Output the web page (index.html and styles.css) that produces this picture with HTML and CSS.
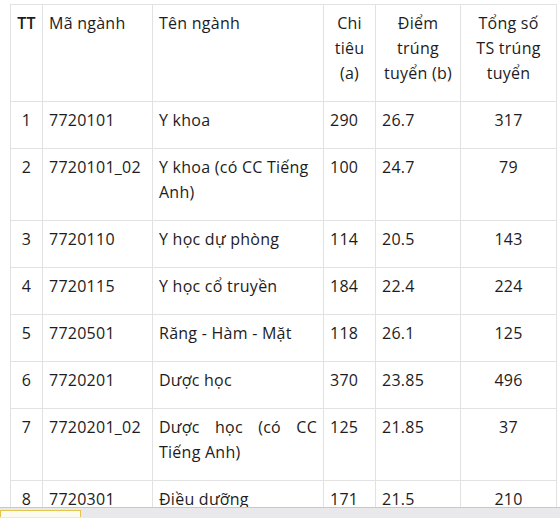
FILE: index.html
```html
<!DOCTYPE html>
<html lang="vi">
<head>
<meta charset="utf-8">
<title>Điểm trúng tuyển</title>
<link rel="stylesheet" href="styles.css">
</head>
<body>
<div class="wrap">
<table class="scores">
  <colgroup>
    <col class="c-tt"><col class="c-ma"><col class="c-ten"><col class="c-chi"><col class="c-diem"><col class="c-tong">
  </colgroup>
  <thead>
    <tr>
      <th class="center strong">TT</th>
      <th>Mã ngành</th>
      <th>Tên ngành</th>
      <th class="center">Chi<br>tiêu<br>(a)</th>
      <th class="center">Điểm<br>trúng<br>tuyển (b)</th>
      <th class="center">Tổng số<br>TS trúng<br>tuyển</th>
    </tr>
  </thead>
  <tbody>
    <tr><td class="center">1</td><td>7720101</td><td>Y khoa</td><td>290</td><td>26.7</td><td class="center">317</td></tr>
    <tr><td class="center">2</td><td>7720101_02</td><td>Y khoa (có CC Tiếng Anh)</td><td>100</td><td>24.7</td><td class="center">79</td></tr>
    <tr><td class="center">3</td><td>7720110</td><td>Y học dự phòng</td><td>114</td><td>20.5</td><td class="center">143</td></tr>
    <tr><td class="center">4</td><td>7720115</td><td>Y học cổ truyền</td><td>184</td><td>22.4</td><td class="center">224</td></tr>
    <tr><td class="center">5</td><td>7720501</td><td>Răng - Hàm - Mặt</td><td>118</td><td>26.1</td><td class="center">125</td></tr>
    <tr><td class="center">6</td><td>7720201</td><td>Dược học</td><td>370</td><td>23.85</td><td class="center">496</td></tr>
    <tr><td class="center">7</td><td>7720201_02</td><td class="just">Dược học (có CC Tiếng Anh)</td><td>125</td><td>21.85</td><td class="center">37</td></tr>
    <tr><td class="center">8</td><td>7720301</td><td>Điều dưỡng</td><td>171</td><td>21.5</td><td class="center">210</td></tr>
  </tbody>
</table>
</div>
<div class="statusbar"><div class="tab"></div></div>
</body>
</html>
```
FILE: styles.css
```css
html, body {
  margin: 0;
  padding: 0;
  background: #ffffff;
}
body {
  font-family: "Open Sans", "Liberation Sans", sans-serif;
  font-size: 16px;
  color: #1c1c22;
}
.wrap {
  padding: 4px 0 0 10px;
}
.scores {
  border-collapse: collapse;
  table-layout: fixed;
  width: 546px;
}
.c-tt { width: 32px; }
.c-ma { width: 110px; }
.c-ten { width: 171px; }
.c-chi { width: 52px; }
.c-diem { width: 85px; }
.c-tong { width: 96px; }
.scores th,
.scores td {
  border: 1px solid #e2e2e2;
  padding: 6px 6px 15px;
  line-height: 25px;
  vertical-align: top;
  text-align: left;
  font-weight: 400;
  letter-spacing: 0.25px;
}
.scores th {
  font-weight: 500;
}
.scores th.strong {
  font-weight: 600;
}
.scores .center {
  text-align: center;
}
.scores .just {
  text-align: justify;
}
.statusbar {
  position: fixed;
  left: 0;
  right: 0;
  bottom: 0;
  height: 8px;
  background: #e9e9eb;
  border-top: 1px solid #c8c8cc;
  padding-top: 2px;
  box-sizing: content-box;
}
.tab {
  width: 79px;
  height: 6px;
  border: 1px solid #e3c44c;
  border-bottom: none;
  background: #fdfaf0;
}
```
